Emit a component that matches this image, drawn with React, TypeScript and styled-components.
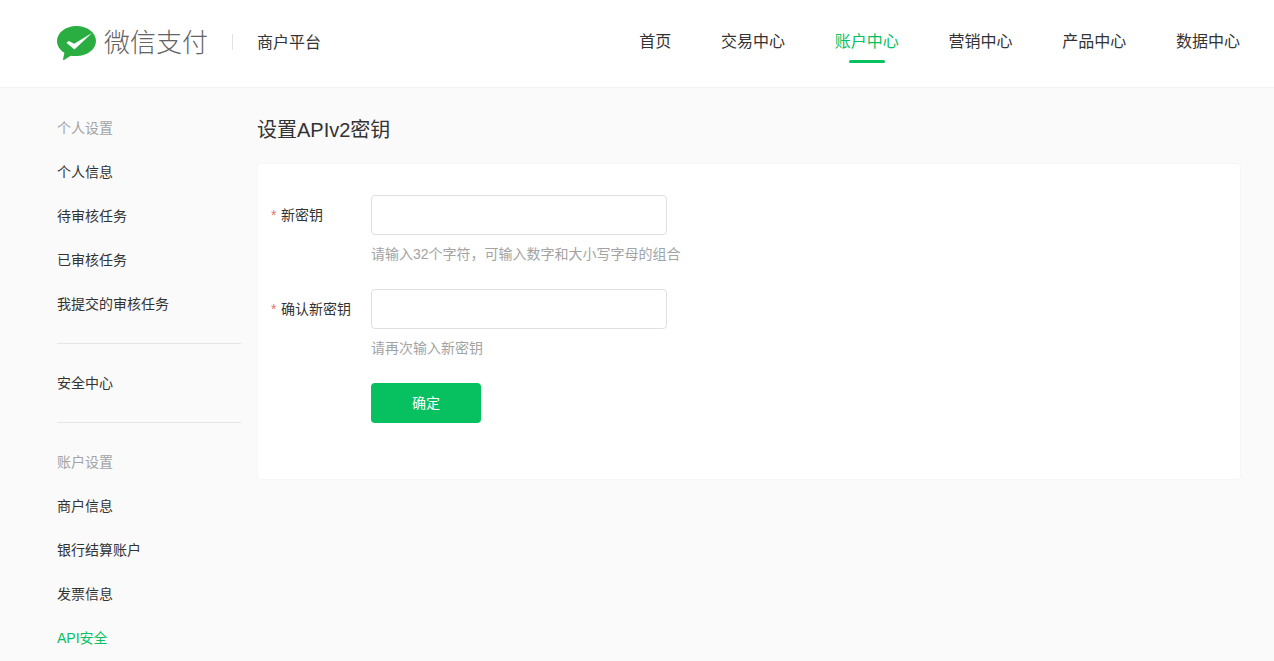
import React from "react"
import styled, { createGlobalStyle } from "styled-components"

const FONT = `"Liberation Sans", "Noto Sans CJK SC", sans-serif`

const GlobalStyle = createGlobalStyle`
  html, body {
    margin: 0;
    height: 661px;
    overflow: hidden;
    background: #fafafa;
    font-family: ${FONT};
    color: #333;
  }
  * { box-sizing: border-box; }
`

const navItems = ["首页", "交易中心", "账户中心", "营销中心", "产品中心", "数据中心"]

const personalLinks = ["个人信息", "待审核任务", "已审核任务", "我提交的审核任务"]
const accountLinks = ["商户信息", "银行结算账户", "发票信息", "API安全"]

const fields = [
  { label: "新密钥", hint: "请输入32个字符，可输入数字和大小写字母的组合" },
  { label: "确认新密钥", hint: "请再次输入新密钥" },
]

const Logo = () => (
  <S.LogoMark width="39" height="34" viewBox="0 0 39 34" aria-hidden="true">
    <path
      d="M19.5 0C8.7 0 0 6.700 0 15c0 4.800 2.900 9 7.400 11.800L6 33.200c-.1.600.5 1 1 .7l6.700-4.100c1.800.4 3.800.2 5.800.2 10.800 0 19.500-6.700 19.500-15S30.300 0 19.500 0z"
      fill="#2aae41"
    />
    <path
      d="M9.400 16.800l2.400-1.800 5.400 2.800L35.300 6.800 17.400 23.600z"
      fill="#fff"
    />
  </S.LogoMark>
)

export default function App() {
  return (
    <>
      <GlobalStyle />
      <S.Header>
        <S.Brand>
          <Logo />
          <S.BrandName>微信支付</S.BrandName>
          <S.BrandDivider />
          <S.Platform>商户平台</S.Platform>
        </S.Brand>
        <S.Nav>
          {navItems.map((item) => (
            <S.NavItem key={item} $active={item === "账户中心"}>
              {item}
            </S.NavItem>
          ))}
        </S.Nav>
      </S.Header>
      <S.Body>
        <S.Sidebar>
          <S.SideGroup>
            <S.SideTitle>个人设置</S.SideTitle>
            {personalLinks.map((link) => (
              <S.SideLink key={link}>{link}</S.SideLink>
            ))}
          </S.SideGroup>
          <S.SideGroup>
            <S.SideLink>安全中心</S.SideLink>
          </S.SideGroup>
          <S.SideGroup>
            <S.SideTitle>账户设置</S.SideTitle>
            {accountLinks.map((link) => (
              <S.SideLink key={link} $active={link === "API安全"}>
                {link}
              </S.SideLink>
            ))}
          </S.SideGroup>
        </S.Sidebar>
        <S.Main>
          <S.Title>设置APIv2密钥</S.Title>
          <S.Card>
            {fields.map((f) => (
              <S.Row key={f.label}>
                <S.Label>
                  <S.Star>*</S.Star>
                  {f.label}
                </S.Label>
                <S.Field>
                  <S.Input type="password" />
                  <S.Hint>{f.hint}</S.Hint>
                </S.Field>
              </S.Row>
            ))}
            <S.Actions>
              <S.Button type="button">确定</S.Button>
            </S.Actions>
          </S.Card>
        </S.Main>
      </S.Body>
    </>
  )
}

const S = {
  Header: styled.header`
    display: flex;
    align-items: flex-start;
    justify-content: space-between;
    height: 88px;
    padding: 0 34px 0 57px;
    background: #fff;
    border-bottom: 1px solid #f3f3f3;
  `,

  Brand: styled.div`
    display: flex;
    align-items: center;
    height: 84px;
  `,

  LogoMark: styled.svg`
    margin-top: 2px;
  `,

  BrandName: styled.div`
    margin: 0 0 4px 8px;
    font-size: 26px;
    font-weight: 300;
    color: #636363;
    white-space: nowrap;
  `,

  BrandDivider: styled.div`
    width: 1px;
    height: 16px;
    margin: 0 24px;
    background: #e2e2e2;
  `,

  Platform: styled.div`
    margin-bottom: 2px;
    font-size: 16px;
    color: #333;
    white-space: nowrap;
  `,

  Nav: styled.nav`
    display: flex;
    gap: 49.75px;
  `,

  NavItem: styled.a<{ $active?: boolean }>`
    position: relative;
    display: block;
    height: 83px;
    line-height: 83px;
    font-size: 16px;
    white-space: nowrap;
    color: ${(p) => (p.$active ? "#07c160" : "#333")};

    &::after {
      content: "";
      display: ${(p) => (p.$active ? "block" : "none")};
      position: absolute;
      left: 14px;
      right: 14px;
      top: 60px;
      height: 3px;
      border-radius: 2px;
      background: #07c160;
    }
  `,

  Body: styled.div`
    display: flex;
    gap: 16px;
    padding: 18px 33px 0 57px;
  `,

  Sidebar: styled.aside`
    flex: 0 0 184px;
  `,

  SideGroup: styled.div`
    padding: 0 0 17px;
    margin-bottom: 17px;
    border-bottom: 1px solid #e6e6e6;

    &:last-child {
      border-bottom: 0;
    }
  `,

  SideTitle: styled.div`
    height: 44px;
    line-height: 44px;
    font-size: 14px;
    color: #a3a3a3;
  `,

  SideLink: styled.a<{ $active?: boolean }>`
    display: block;
    height: 44px;
    line-height: 44px;
    font-size: 14px;
    color: ${(p) => (p.$active ? "#07c160" : "#333")};
  `,

  Main: styled.main`
    flex: 1;
    min-width: 0;
  `,

  Title: styled.h1`
    height: 57px;
    margin: 0;
    font-size: 20px;
    font-weight: 400;
    line-height: 48px;
    color: #333;
  `,

  Card: styled.section`
    height: 317px;
    padding: 32px 0 0 14px;
    background: #fff;
    border-radius: 4px;
    box-shadow: 0 0 0 1px #f6f6f6 inset;
  `,

  Row: styled.div`
    display: flex;
    height: 94px;
  `,

  Label: styled.label`
    flex: 0 0 100px;
    height: 40px;
    line-height: 40px;
    font-size: 14px;
    color: #333;
    white-space: nowrap;
  `,

  Star: styled.span`
    display: inline-block;
    width: 10px;
    color: #e0766c;
  `,

  Field: styled.div`
    display: flex;
    flex-direction: column;
  `,

  Input: styled.input`
    width: 296px;
    height: 40px;
    padding: 0 12px;
    background: #fff;
    border: 1px solid #e0e0e0;
    border-radius: 4px;
    outline: none;
  `,

  Hint: styled.div`
    margin-top: 9px;
    line-height: 20px;
    font-size: 14px;
    color: #a3a3a3;
    white-space: nowrap;
  `,

  Actions: styled.div`
    padding-left: 100px;
  `,

  Button: styled.button`
    width: 110px;
    height: 40px;
    padding: 0 0 2px;
    font-family: ${FONT};
    font-size: 14px;
    color: #fff;
    background: #07c160;
    border: 0;
    border-radius: 4px;
  `,
}
